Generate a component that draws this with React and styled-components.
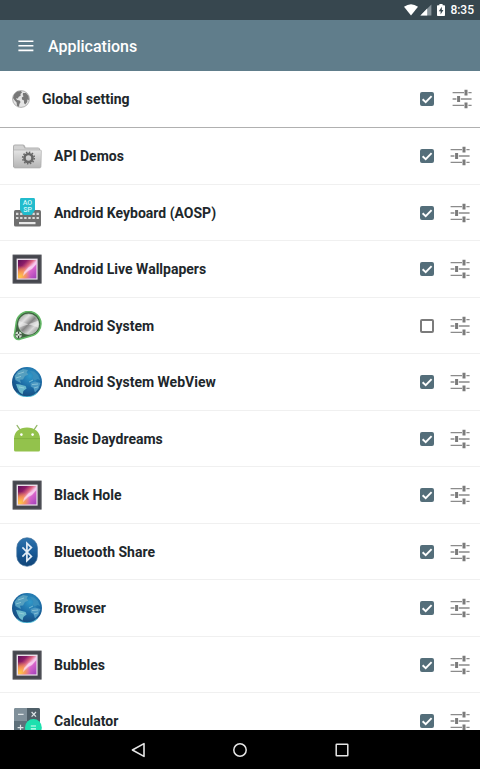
import React, { useState } from 'react'
import styled, { createGlobalStyle } from 'styled-components'

const GlobalStyle = createGlobalStyle`
  * {
    box-sizing: border-box;
  }
  body {
    margin: 0;
    background: #fff;
    font-family: Roboto, 'Open Sans', sans-serif;
    color: #21272b;
  }
  button {
    display: flex;
    align-items: center;
    justify-content: center;
    padding: 0;
    border: none;
    background: none;
    cursor: pointer;
  }
  svg {
    display: block;
    flex: none;
  }
`

const GlobalIcon = () => (
  <svg width="18" height="18" viewBox="0 0 18 18">
    <circle cx="9" cy="9" r="8.4" fill="#e4e4e4" stroke="#a0a0a0" strokeWidth="0.8" />
    <path d="M2 4.5 L5 1.6 L9 1 L10 2.5 L8.4 4 L8.8 5.5 L6.5 7 L6 8.6 L4 8.3 L5 10 L7.6 10.6 L8.6 12 L7.4 14 L7 16.8 L5 15.8 L4.6 12.5 L2.8 10.6 L1 8Z" fill="#777" />
    <path d="M11 3 L14 3 L16.5 6 L17 10 L15.4 9.4 L15.2 12 L13.2 14.6 L12 13 L12 10.4 L10 9.4 L9.8 7.4 L11.6 6.2 L10.8 5Z" fill="#777" />
  </svg>
)

const FolderIcon = () => (
  <svg width="30" height="30" viewBox="0 0 30 30">
    <defs>
      <linearGradient id="folder" x1="0" y1="0" x2="0" y2="1">
        <stop offset="0" stopColor="#e4e4e4" />
        <stop offset="1" stopColor="#b4b4b4" />
      </linearGradient>
    </defs>
    <path d="M1 5.5 Q1 3.5 3 3.5 H11 Q12.5 3.5 13 5 L13.6 6.5 H26 Q28 6.5 28 8.5 V26 H1Z" fill="#b0b0b0" />
    <path d="M2 5.6 Q2 4.5 3 4.5 H11 L12.6 7.5 H27 V12 H2Z" fill="#d2d2d2" />
    <path d="M2.4 9 H28.4 Q29.4 9 29.4 10 L29 25.6 Q29 27 27.6 27 H3 Q1.6 27 1.6 25.6 L1.4 10 Q1.4 9 2.4 9Z" fill="url(#folder)" stroke="#a8a8a8" strokeWidth="0.6" />
    <circle cx="16.5" cy="17" r="4" fill="none" stroke="#686868" strokeWidth="2.6" />
    <circle cx="16.5" cy="17" r="5.8" fill="none" stroke="#686868" strokeWidth="1.6" strokeDasharray="1.5 1.5" />
  </svg>
)

const KeyboardIcon = () => (
  <svg width="30" height="30" viewBox="0 0 30 30">
    <rect x="2" y="12" width="27" height="16.5" rx="1.6" fill="#6f6f6f" />
    <path d="M4 15.8 H27 M4 20 H27" stroke="#dadada" strokeWidth="2.2" strokeDasharray="2.4 1.7" />
    <rect x="7" y="24" width="16.5" height="2.2" fill="#e8e8e8" />
    <path d="M9.4 0 H21.6 Q23 0 23 1.4 V12 L19.5 17 H11.5 L8 12 V1.4 Q8 0 9.4 0Z" fill="#22bccd" />
    <g fill="#d5f6f8" fontSize="7" fontWeight="500" textAnchor="middle">
      <text x="15.5" y="7">AO</text>
      <text x="15.5" y="14">SP</text>
    </g>
  </svg>
)

const WallpaperIcon = () => (
  <svg width="30" height="30" viewBox="0 0 30 30">
    <defs>
      <linearGradient id="wallpaper" x1="0" y1="0" x2="1" y2="1">
        <stop offset="0" stopColor="#5c1058" />
        <stop offset="0.25" stopColor="#8c1c68" />
        <stop offset="0.42" stopColor="#dc6480" />
        <stop offset="0.52" stopColor="#f4b4dc" />
        <stop offset="0.65" stopColor="#d864cc" />
        <stop offset="1" stopColor="#a040b8" />
      </linearGradient>
      <radialGradient id="glow" cx="0.1" cy="0.9" r="0.6">
        <stop offset="0" stopColor="#ffc840" />
        <stop offset="0.5" stopColor="#fa9c48" stopOpacity="0.8" />
        <stop offset="1" stopColor="#fa9c48" stopOpacity="0" />
      </radialGradient>
    </defs>
    <rect x="0.6" y="0.6" width="29" height="29" fill="#45464d" />
    <rect x="1.6" y="1.6" width="27" height="27" fill="none" stroke="#55565e" strokeWidth="0.6" />
    <rect x="4.6" y="4.6" width="21" height="21" fill="#e9dfe9" />
    <rect x="6" y="6" width="18.4" height="18.4" fill="url(#wallpaper)" />
    <rect x="6" y="6" width="18.4" height="18.4" fill="url(#glow)" />
    <path d="M12 18 L17 13 L20 12 L24.4 7 V10 L20 15 L16 17 L11 22Z" fill="#fbdcf6" opacity="0.75" />
  </svg>
)

const SystemIcon = () => (
  <svg width="30" height="30" viewBox="0 0 30 30">
    <defs>
      <linearGradient id="metal" x1="0" y1="0" x2="1" y2="1">
        <stop offset="0" stopColor="#8c8c8c" />
        <stop offset="0.3" stopColor="#e2e2e2" />
        <stop offset="0.5" stopColor="#858585" />
        <stop offset="0.7" stopColor="#d8d8d8" />
        <stop offset="1" stopColor="#777" />
      </linearGradient>
    </defs>
    <path d="M4.4 10.5 A12.4 12.4 0 1 1 19 25 L8.4 28 A4.2 4.2 0 0 1 2.6 22.6Z" fill="#416343" stroke="#63b866" strokeWidth="1.5" />
    <circle cx="16.6" cy="13.2" r="10.2" fill="url(#metal)" stroke="#c5d6c6" strokeWidth="0.6" />
    <path d="M16.6 13.2 L7 10 A10 10 0 0 0 7 16.5Z" fill="#eee" opacity="0.6" />
    <path d="M16.6 13.2 L26.2 9.8 A10 10 0 0 1 26.2 16.5Z" fill="#f4f4f4" opacity="0.6" />
    <circle cx="6.6" cy="23.8" r="3.2" fill="#cfdccf" />
    <path d="M6.6 20.6 V27 M3.4 23.8 H9.8" stroke="#2d3b2e" strokeWidth="1.1" />
    <circle cx="6.6" cy="23.8" r="1" fill="#e8efe8" />
  </svg>
)

const BrowserIcon = () => (
  <svg width="30" height="30" viewBox="0 0 30 30">
    <defs>
      <radialGradient id="ocean" cx="0.6" cy="0.3" r="0.75">
        <stop offset="0" stopColor="#3199c9" />
        <stop offset="0.55" stopColor="#1b68a2" />
        <stop offset="1" stopColor="#164a7c" />
      </radialGradient>
    </defs>
    <circle cx="15" cy="15" r="15" fill="url(#ocean)" />
    <path d="M2.6 9 L6 4.6 L11 2 L16 3 L14.6 5.6 L16.4 7.6 L13 9 L11 12.4 L8 12.8 L9 16 L6 14.6 L3.4 13Z" fill="#559fbf" />
    <path d="M4 17 L8 17.6 L13.6 19 L14.6 21.6 L11.4 24 L10.6 27.6 L7.4 25 L5.4 21Z" fill="#6ab8cb" />
    <path d="M18 4 L22 4.4 L26 8 L28 13 L25.6 12 L22.6 13.6 L20.6 11.4 L21.4 8.6Z" fill="#398ebb" />
    <path d="M18.6 16 L23 14.6 L28.4 16 L26.6 21.6 L23 25.6 L21.4 21 L18.8 19.6Z" fill="#4c98c2" />
    <path d="M6 7 L12 5 M4 11 L9 9.4 M7 20 L12 21 M17 15 L21 13 M20 17.6 L26 17 M22 21 L26 19.8" stroke="#b4dfe6" strokeWidth="0.8" opacity="0.7" />
    <path d="M5 25.8 A14.5 14.5 0 0 0 25 25.8" fill="none" stroke="#55c5de" strokeWidth="1.1" opacity="0.8" />
  </svg>
)

const DroidIcon = () => (
  <svg width="30" height="30" viewBox="0 0 30 30">
    <path d="M5 1.4 L8.4 6.4 M25 1.4 L21.6 6.4" stroke="#93b668" strokeWidth="1.2" strokeLinecap="round" />
    <path d="M2 14.6 C2 8 7.6 3.6 15 3.6 C22.4 3.6 28 8 28 14.6 V26 Q28 27.6 26.4 27.6 H3.6 Q2 27.6 2 26Z" fill="#93c24c" />
    <path d="M2 14.6 H28" stroke="#7eae3c" strokeWidth="0.8" />
    <circle cx="9.4" cy="10.6" r="1.3" fill="#fff" />
    <circle cx="20.6" cy="10.6" r="1.3" fill="#fff" />
  </svg>
)

const BluetoothIcon = () => (
  <svg width="30" height="30" viewBox="0 0 30 30">
    <defs>
      <linearGradient id="bluetooth" x1="0" y1="0" x2="0" y2="1">
        <stop offset="0" stopColor="#2f74ad" />
        <stop offset="0.5" stopColor="#185a97" />
        <stop offset="1" stopColor="#114477" />
      </linearGradient>
    </defs>
    <rect x="4.8" y="0.8" width="20.6" height="28.4" rx="10" fill="url(#bluetooth)" stroke="#3f6f9b" strokeWidth="0.7" />
    <path d="M10.4 10.4 L19.4 19.4 L14.9 23.8 V6.2 L19.4 10.6 L10.4 19.6" fill="none" stroke="#e3edf6" strokeWidth="1.7" />
  </svg>
)

const CalculatorIcon = () => (
  <svg width="30" height="30" viewBox="0 0 30 30">
    <rect x="2" y="2" width="26" height="26" rx="2" fill="#5e707a" />
    <path d="M4 2 H15 V15 H2 V4 Q2 2 4 2Z" fill="#80909a" />
    <path d="M15 2 H26 Q28 2 28 4 V15 H15Z" fill="#4f5f68" />
    <path d="M6 8.4 H11.6 M5.6 21.6 H11.4 M8.5 18.7 V24.5 M19.6 6 L24 10.6 M24 6 L19.6 10.6" stroke="#dfe5e8" strokeWidth="1.2" />
    <circle cx="21.4" cy="21.4" r="8.4" fill="#1de0ae" />
    <path d="M18.8 20 H24 M18.8 22.8 H24" stroke="#d9fff4" strokeWidth="1.2" />
  </svg>
)

const TuneIcon = () => (
  <svg width="20" height="20" viewBox="0 0 20 20">
    <path d="M0.6 3.7 H12 M16.4 3.7 H19.6 M0.6 10 H4.4 M8.8 10 H19.6 M0.6 16.3 H12 M16.4 16.3 H19.6" stroke="#8b8b8b" strokeWidth="1.3" />
    <path d="M14 0.8 V6.6 M6.6 7.1 V12.9 M14 13.4 V19.2" stroke="#7b7b7b" strokeWidth="3" />
  </svg>
)

const apps = [
  { name: 'API Demos', icon: FolderIcon, on: true },
  { name: 'Android Keyboard (AOSP)', icon: KeyboardIcon, on: true },
  { name: 'Android Live Wallpapers', icon: WallpaperIcon, on: true },
  { name: 'Android System', icon: SystemIcon, on: false },
  { name: 'Android System WebView', icon: BrowserIcon, on: true },
  { name: 'Basic Daydreams', icon: DroidIcon, on: true },
  { name: 'Black Hole', icon: WallpaperIcon, on: true },
  { name: 'Bluetooth Share', icon: BluetoothIcon, on: true },
  { name: 'Browser', icon: BrowserIcon, on: true },
  { name: 'Bubbles', icon: WallpaperIcon, on: true },
  { name: 'Calculator', icon: CalculatorIcon, on: true }
]

const Setting = ({ id, name, icon: Icon, on }) => {
  const [checked, setChecked] = useState(on)
  return (
    <>
      <Icon />
      <Name htmlFor={id}>{name}</Name>
      <CheckWrapper>
        <CheckBox
          id={id}
          type="checkbox"
          checked={checked}
          onChange={() => setChecked(!checked)}
        />
        {checked && (
          <Tick viewBox="0 0 14 14">
            <path d="M2.6 7.2 L5.7 10.2 L11.6 4.2" fill="none" stroke="#fff" strokeWidth="1.9" />
          </Tick>
        )}
      </CheckWrapper>
      <button type="button" aria-label={`${name} options`}>
        <TuneIcon />
      </button>
    </>
  )
}

const App = () => (
  <Screen>
    <GlobalStyle />
    <StatusBar>
      <svg width="14" height="12" viewBox="0 0 14 12">
        <path d="M0 2.8 Q7 -2.4 14 2.8 L7 11.6Z" fill="#fff" />
      </svg>
      <svg width="12" height="12" viewBox="0 0 12 12">
        <path d="M11.4 0.4 V11.4 H0.4Z" fill="#87939a" />
        <path d="M7.2 4.6 V11.4 H0.4Z" fill="#fff" />
      </svg>
      <Battery width="8" height="12" viewBox="0 0 8 12">
        <path d="M2.4 0 H5.6 V1.2 H7.2 Q8 1.2 8 2 V11.2 Q8 12 7.2 12 H0.8 Q0 12 0 11.2 V2 Q0 1.2 0.8 1.2 H2.4Z" fill="#fff" />
        <path d="M4.8 2.8 L1.8 7.2 H3.6 V10.4 L6.4 6 H4.8Z" fill="#37474f" />
      </Battery>
      <Clock>8:35</Clock>
    </StatusBar>
    <Toolbar>
      <button type="button" aria-label="Menu">
        <svg width="16" height="12" viewBox="0 0 16 12">
          <path d="M0.4 1.2 H15.4 M0.4 5.8 H15.4 M0.4 10.4 H15.4" stroke="#fff" strokeWidth="1.6" />
        </svg>
      </button>
      <Title>Applications</Title>
    </Toolbar>
    <GlobalRow>
      <Setting id="global" name="Global setting" icon={GlobalIcon} on />
    </GlobalRow>
    <AppList>
      {apps.map((app, i) => (
        <AppRow key={app.name}>
          <Setting id={`app-${i}`} {...app} />
        </AppRow>
      ))}
    </AppList>
    <NavBar>
      <NavButton type="button" aria-label="Back">
        <svg width="16" height="16" viewBox="0 0 16 16">
          <path d="M14 1.6 V14.4 L2.4 8Z" fill="none" stroke="#e6e6e6" strokeWidth="1.6" strokeLinejoin="round" />
        </svg>
      </NavButton>
      <NavButton type="button" aria-label="Home">
        <svg width="16" height="16" viewBox="0 0 16 16">
          <circle cx="8" cy="8" r="6.2" fill="none" stroke="#e6e6e6" strokeWidth="1.5" />
        </svg>
      </NavButton>
      <NavButton type="button" aria-label="Recent apps">
        <svg width="16" height="16" viewBox="0 0 16 16">
          <rect x="2.2" y="2.2" width="11.6" height="11.6" rx="0.6" fill="none" stroke="#e6e6e6" strokeWidth="1.5" />
        </svg>
      </NavButton>
    </NavBar>
  </Screen>
)

const Screen = styled.div`
  display: flex;
  flex-direction: column;
  height: 100vh;
`

const StatusBar = styled.div`
  display: flex;
  flex: none;
  align-items: center;
  justify-content: flex-end;
  gap: 2px;
  height: 20px;
  padding-right: 6px;
  background: #37474f;
`

const Battery = styled.svg`
  margin: 0 3px;
`

const Clock = styled.span`
  color: #fff;
  font-size: 12px;
  font-weight: 500;
  line-height: 20px;
`

const Toolbar = styled.header`
  display: flex;
  flex: none;
  align-items: center;
  gap: 14px;
  height: 51px;
  padding: 0 18px;
  background: #607d8b;
`

const Title = styled.h1`
  margin: 0;
  padding-top: 2px;
  color: #fff;
  font-size: 16px;
  font-weight: 500;
  line-height: 20px;
`

const Row = styled.div`
  display: flex;
  flex: none;
  align-items: center;
  gap: 12px;
`

const CheckWrapper = styled.span`
  position: relative;
  width: 14px;
  height: 14px;
  margin-right: 4px;
`

const GlobalRow = styled(Row)`
  height: 57px;
  padding: 0 8px 0 12px;
  border-bottom: 1px solid #b0b0b0;
  ${CheckWrapper} {
    margin-right: 6px;
  }
`

const AppList = styled.ul`
  flex: 1;
  min-height: 0;
  margin: 0;
  padding: 0;
  list-style: none;
  overflow-y: auto;
  scrollbar-width: none;
`

const AppRow = styled(Row).attrs({ as: 'li' })`
  height: 57px;
  padding: 0 10px 0 12px;
  border-bottom: 1px solid #f0f0f0;
  &:nth-child(even) {
    height: 56px;
  }
`

const Name = styled.label`
  flex: 1;
  font-size: 14px;
  font-weight: 700;
  line-height: 20px;
`

const CheckBox = styled.input`
  display: block;
  appearance: none;
  width: 14px;
  height: 14px;
  margin: 0;
  border: 2px solid #7b7b7b;
  border-radius: 2px;
  cursor: pointer;
  &:checked {
    border-color: #546e7a;
    background: #546e7a;
  }
`

const Tick = styled.svg`
  position: absolute;
  inset: 0;
  pointer-events: none;
`

const NavBar = styled.nav`
  display: flex;
  flex: none;
  align-items: center;
  justify-content: center;
  gap: 78px;
  height: 39px;
  background: #000;
`

const NavButton = styled.button`
  width: 24px;
  height: 24px;
`

export default App
